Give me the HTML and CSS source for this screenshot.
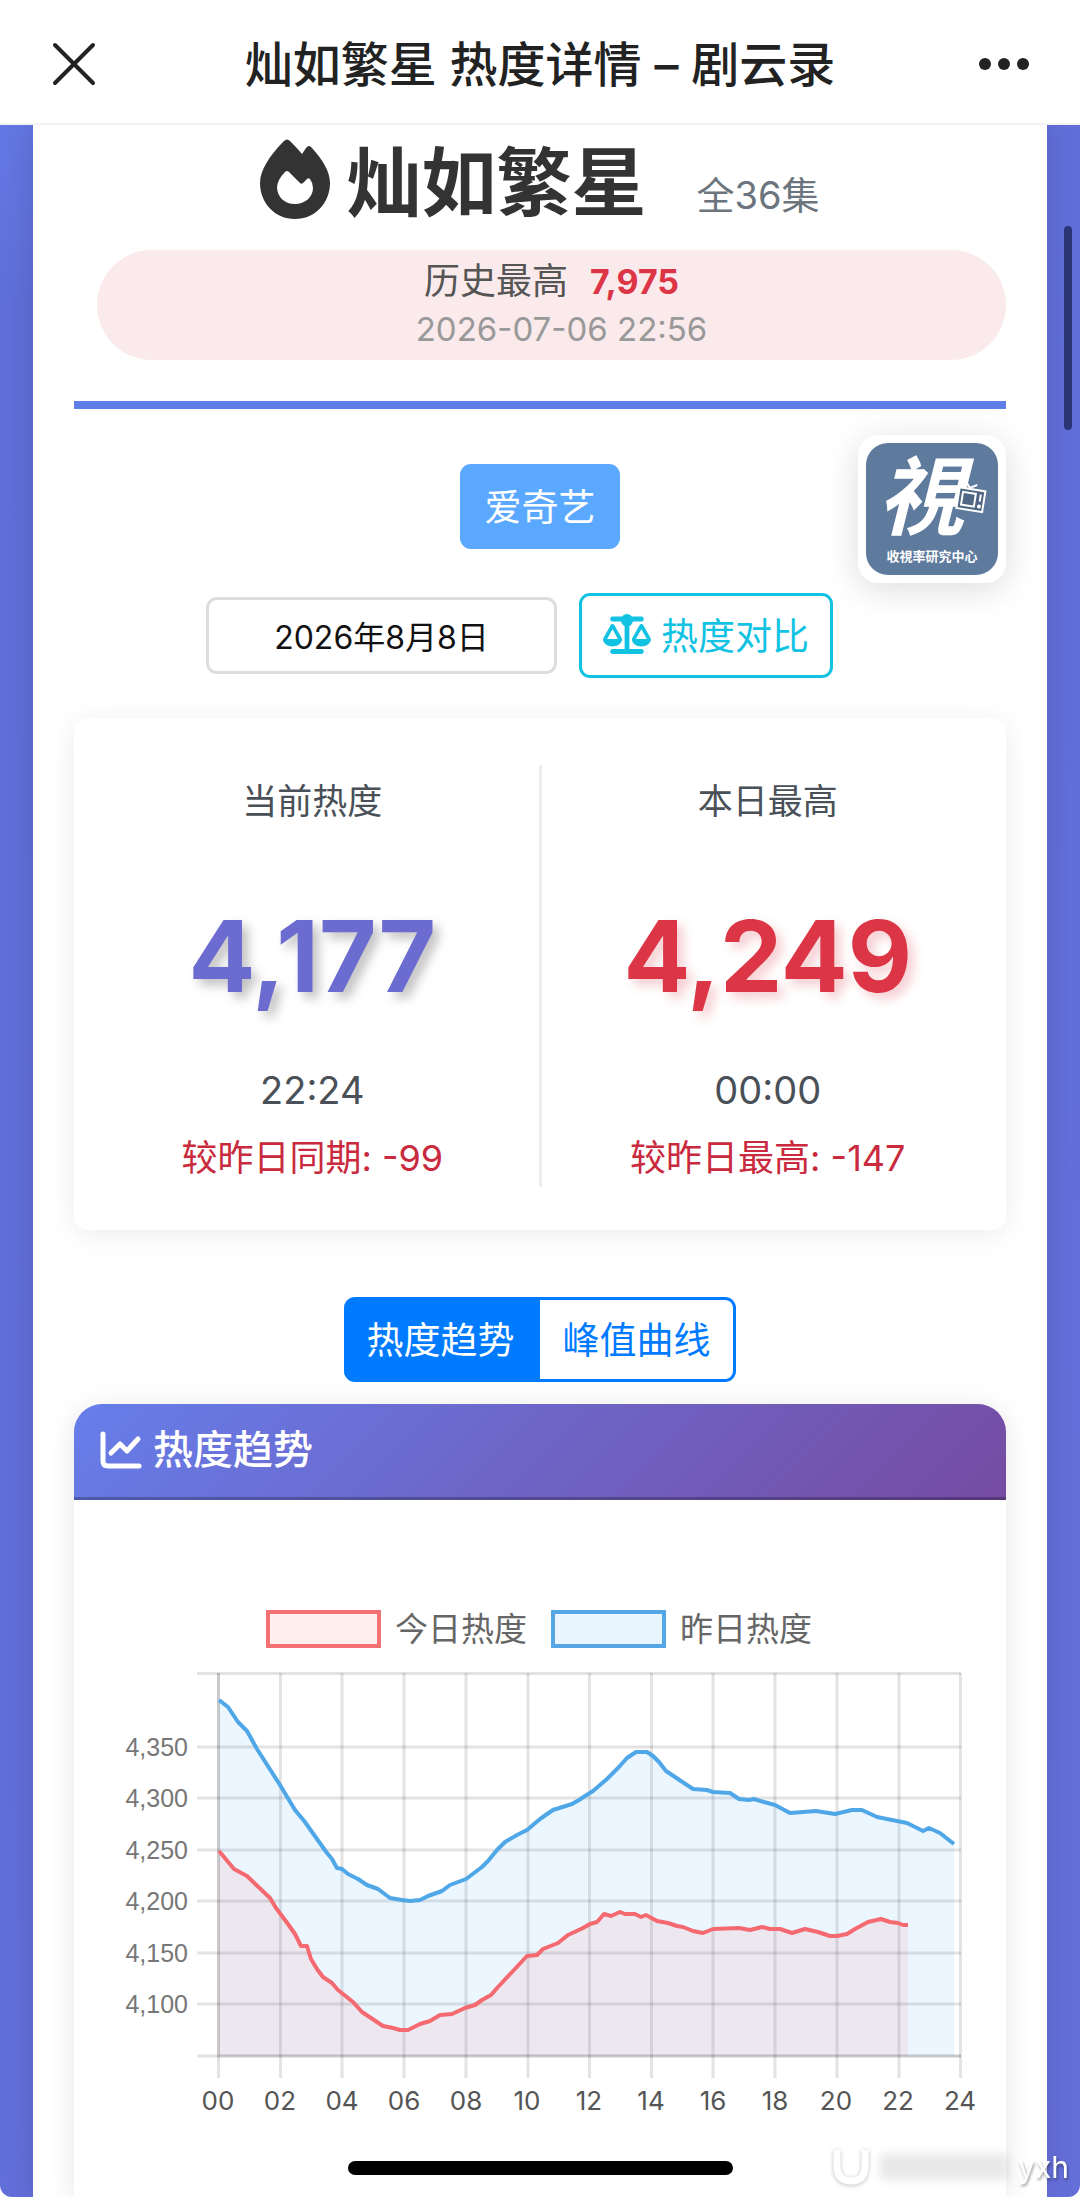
FILE: index.html
```html
<!DOCTYPE html>
<html lang="zh-CN">
<head>
<meta charset="UTF-8">
<meta name="viewport" content="width=device-width, initial-scale=1.0">
<title>灿如繁星 热度详情 – 剧云录</title>
<link rel="stylesheet" href="styles.css">
</head>
<body>
<header class="navbar">
    <button class="nav-button" aria-label="关闭">
        <svg width="52" height="44" viewBox="0 0 52 44"><path d="M5 3L43 41M43 3L5 41" stroke="#222" stroke-width="4" stroke-linecap="round"/></svg>
    </button>
    <div class="nav-title">灿如繁星 热度详情 – 剧云录</div>
    <button class="nav-button" aria-label="更多">
        <svg width="52" height="14" viewBox="0 0 52 14" fill="#222"><circle cx="7" cy="7" r="6"/><circle cx="26" cy="7" r="6"/><circle cx="45" cy="7" r="6"/></svg>
    </button>
</header>

<main class="container">
    <section class="title-area">
        <div class="title-row">
            <svg class="fire" width="70" height="80" viewBox="0 0 70 80"><path fill="#333" fill-rule="evenodd" d="M24 2Q27-1 30 2Q37 9 42 15L46 9Q49 5 52 9C62 20 70 32 70 44C70 64 55 80 35 80C15 80 0 64 0 44C0 31 10 16 24 2ZM25 33Q17 41 17 49C18 59 25 65 35 65C45 65 53 58 53 49Q53 44 50 40Q48 38 46 41L43 44Q41 46 39 43L29 33Q27 31 25 33Z"/></svg>
            <h1>灿如繁星</h1>
            <span class="episodes">全36集</span>
        </div>
        <div class="history">
            <div class="history-top">历史最高 <b>7,975</b></div>
            <div class="history-time">2026-07-06 22:56</div>
        </div>
    </section>

    <section class="controls">
        <button class="platform">爱奇艺</button>
        <div class="control-row">
            <input class="date-input" type="text" aria-label="日期" value="2026年8月8日">
            <button class="compare">
                <svg width="48" height="40" viewBox="0 0 640 512" preserveAspectRatio="none" fill="currentColor"><path d="M384 32h128c17.700 0 32 14.300 32 32s-14.300 32-32 32H398.400c-5.200 25.800-22.900 47.100-46.400 57.300V448h160c17.700 0 32 14.300 32 32s-14.300 32-32 32H128c-17.700 0-32-14.300-32-32s14.300-32 32-32h160V153.300c-23.500-10.300-41.200-31.600-46.400-57.300H128c-17.700 0-32-14.300-32-32s14.300-32 32-32h128c14.600-19.400 37.800-32 64-32s49.400 12.600 64 32zm55.600 288h144.900L512 195.800 439.600 320zM512 416c-62.900 0-115.200-34-126-78.900-2.600-11 1-22.300 6.700-32.100l95.200-163.200c5-8.600 14.200-13.800 24.100-13.800s19.100 5.300 24.100 13.800L631.300 305c5.700 9.800 9.300 21.100 6.700 32.100C627.200 382 574.900 416 512 416zM126.800 195.800L54.400 320h144.900L126.800 195.800zM.9 337.100c-2.600-11 1-22.300 6.700-32.100l95.200-163.200c5-8.600 14.200-13.800 24.100-13.800s19.100 5.300 24.100 13.800L246.200 305c5.700 9.800 9.300 21.100 6.700 32.100C242 382 189.700 416 126.800 416S11.700 382 .9 337.100z"/></svg>
                <span>热度对比</span>
            </button>
        </div>
        <div class="logo-card">
            <div class="logo">
                <svg width="132" height="132" viewBox="0 0 132 132">
                    <text class="logo-main" x="55" y="85" text-anchor="middle">視</text>
                    <g fill="none" stroke="#fff" stroke-width="2" transform="rotate(9 104 56)"><rect x="92" y="46" width="26" height="21" fill="#4f6685"/><rect x="96" y="50" width="13" height="13"/><path d="M114 50v7M102 45l-5-6M102 45l7-4"/><circle cx="114" cy="62" r="1"/></g>
                    <text class="logo-sub" x="66" y="118" text-anchor="middle">收視率研究中心</text>
                </svg>
            </div>
        </div>
    </section>

    <section class="stats">
        <div class="stat">
            <div class="stat-label">当前热度</div>
            <div class="stat-value">4,177</div>
            <div class="stat-time">22:24</div>
            <div class="stat-diff">较昨日同期: -99</div>
        </div>
        <div class="stat">
            <div class="stat-label">本日最高</div>
            <div class="stat-value max">4,249</div>
            <div class="stat-time">00:00</div>
            <div class="stat-diff">较昨日最高: -147</div>
        </div>
    </section>

    <div class="tabs">
        <button class="tab active">热度趋势</button>
        <button class="tab">峰值曲线</button>
    </div>

    <section class="chart-card">
        <div class="chart-header">
            <svg width="42" height="38" viewBox="0 0 42 38" fill="none" stroke="#fff" stroke-width="5" stroke-linecap="round" stroke-linejoin="round"><path d="M3 3V30Q3 35 8 35H39"/><path d="M11 22L20 13L27 20L38 8"/></svg>
            <h2>热度趋势</h2>
        </div>
        <div class="legend">
            <span class="swatch today"></span><span>今日热度</span>
            <span class="swatch yesterday"></span><span>昨日热度</span>
        </div>
        <svg class="chart" viewBox="0 0 932 460">
            <!-- grid -->
            <path class="grid" d="M123 13.500H887M123 87H887M123 138H887M123 190H887M123 241H887M123 293H887M123 344H887M123 396H887"/>
            <path class="grid" d="M144.500 13V418M206.500 13V418M268 13V418M330 13V418M392 13V418M454 13V418M515.500 13V418M577.500 13V418M639 13V418M701 13V418M763 13V418M825 13V418M886.500 13V418"/>
            <path class="grid" d="M144.500 13V396H887"/>
            <!-- yesterday -->
            <path class="area-yesterday" d="M145 396V40L154 47 164 62 173 71 183 89 206 125 221 150 231 162 238 172 253 193 258 199 263 208 268 209 274 214 284 219 293 225 304 229 316 238 328 240 336 241 346 240 354 236 368 231 376 225 384 222 392 219 408 207 414 201 423 190 431 182 443 175 453 170 466 159 479 150 498 144 505 140 511 136 519 131 533 119 544 108 553 98 562 92 573 92 579 96 585 102 592 111 604 119 619 129 633 130 639 132 656 133 665 139 675 140 680 139 690 142 701 145 716 153 742 151 761 154 778 150 788 150 803 157 833 163 849 171 855 168 866 173 880 184V396Z"/>
            <polyline class="line-yesterday" points="145,40 154,47 164,62 173,71 183,89 206,125 221,150 231,162 238,172 253,193 258,199 263,208 268,209 274,214 284,219 293,225 304,229 316,238 328,240 336,241 346,240 354,236 368,231 376,225 384,222 392,219 408,207 414,201 423,190 431,182 443,175 453,170 466,159 479,150 498,144 505,140 511,136 519,131 533,119 544,108 553,98 562,92 573,92 579,96 585,102 592,111 604,119 619,129 633,130 639,132 656,133 665,139 675,140 680,139 690,142 701,145 716,153 742,151 761,154 778,150 788,150 803,157 833,163 849,171 855,168 866,173 880,184"/>
            <!-- today -->
            <path class="area-today" d="M145 396V191L160 209 173 216 196 238 202 248 214 264 221 274 227 286 233 286 237 299 243 309 249 317 258 323 264 330 279 342 288 352 294 356 309 366 319 368 326 370 334 370 346 364 356 361 366 355 378 354 391 348 401 345 408 340 417 335 424 327 453 296 463 295 469 289 484 283 494 275 509 268 516 264 523 262 530 254 537 256 546 252 551 254 561 254 567 257 572 255 583 261 594 263 603 266 609 267 619 271 629 273 639 269 665 268 676 270 688 267 696 269 706 269 718 273 731 269 744 272 756 276 763 276 773 274 781 269 794 262 807 259 816 262 824 263 829 265 834 265V396Z"/>
            <polyline class="line-today" points="145,191 160,209 173,216 196,238 202,248 214,264 221,274 227,286 233,286 237,299 243,309 249,317 258,323 264,330 279,342 288,352 294,356 309,366 319,368 326,370 334,370 346,364 356,361 366,355 378,354 391,348 401,345 408,340 417,335 424,327 453,296 463,295 469,289 484,283 494,275 509,268 516,264 523,262 530,254 537,256 546,252 551,254 561,254 567,257 572,255 583,261 594,263 603,266 609,267 619,271 629,273 639,269 665,268 676,270 688,267 696,269 706,269 718,273 731,269 744,272 756,276 763,276 773,274 781,269 794,262 807,259 816,262 824,263 829,265 834,265"/>
            <g class="y-labels">
                <text x="114" y="96">4,350</text>
                <text x="114" y="147">4,300</text>
                <text x="114" y="199">4,250</text>
                <text x="114" y="250">4,200</text>
                <text x="114" y="302">4,150</text>
                <text x="114" y="353">4,100</text>
            </g>
            <g class="x-labels">
                <text x="144" y="450">00</text>
                <text x="206" y="450">02</text>
                <text x="268" y="450">04</text>
                <text x="330" y="450">06</text>
                <text x="392" y="450">08</text>
                <text x="453" y="450">10</text>
                <text x="515" y="450">12</text>
                <text x="577" y="450">14</text>
                <text x="639" y="450">16</text>
                <text x="701" y="450">18</text>
                <text x="762" y="450">20</text>
                <text x="824" y="450">22</text>
                <text x="886" y="450">24</text>
            </g>
        </svg>
    </section>
</main>

<div class="scrollbar"></div>
<div class="home-bar"></div>
<div class="watermark">
    <svg width="38" height="40" viewBox="0 0 38 40" fill="none" stroke="#fff" stroke-width="7"><path d="M5 3V19Q5 34 19 34Q33 34 33 19V3"/></svg>
    <span class="smudge"></span>
    <span>yxh</span>
</div>
</body>
</html>
```
FILE: styles.css
```css
* {
    box-sizing: border-box;
}
html {
    background-color: #fff;
}
body {
    font-family: Inter, "Noto Sans CJK SC", sans-serif;
    background: linear-gradient(135deg, #667eea 0%, #5f6ed8 10%, #656fda 100%);
    border-radius: 0 0 12px 12px;
    color: #333;
    margin: 0;
}
h1, h2 {
    margin: 0;
}
button, input {
    font-family: inherit;
}
.navbar {
    position: relative;
    background-color: #fff;
    border-bottom: 2px solid #f3f3f3;
    height: 125px;
    padding: 4px 50px 0;
    display: flex;
    justify-content: space-between;
    align-items: center;
}
.nav-button {
    background: none;
    border: 0;
    padding: 0;
    display: flex;
}
.nav-title {
    font-size: 48px;
    font-weight: 500;
    color: #222;
    padding-bottom: 5px;
}
.container {
    background-color: #fff;
    box-shadow: 0 0 28px rgba(0,0,0,0.12);
    margin: 0 33px;
    padding: 14px 41px 0;
}
.title-area {
    border-bottom: 8px solid #5f7de6;
    padding-bottom: 41px;
}
.title-row {
    display: flex;
    justify-content: center;
    height: 88px;
}
h1 {
    font-size: 75px;
    line-height: 88px;
    margin: 0 50px 0 16px;
}
.episodes {
    color: #6c757d;
    font-size: 38px;
    line-height: 112px;
}
.history {
    background-color: #faeaec;
    border-radius: 55px;
    margin: 23px 0 0 23px;
    height: 110px;
    padding: 7px 8px;
    text-align: center;
    color: #555;
    font-size: 36px;
    line-height: 48px;
}
.history b {
    color: #dc3545;
    font-size: 34px;
    margin-left: 12px;
}
.history-time {
    color: #999;
    font-size: 33px;
    line-height: 46px;
    padding-left: 20px;
}
.controls {
    position: relative;
    padding-top: 55px;
    display: flex;
    flex-direction: column;
    align-items: center;
}
.platform {
    background-color: #5aa8ff;
    border: 0;
    border-radius: 11px;
    color: #fff;
    font-size: 37px;
    width: 160px;
    height: 85px;
    padding: 0 0 4px;
}
.control-row {
    display: flex;
    align-items: center;
    gap: 22px;
    margin-top: 44px;
    padding-right: 41px;
    width: 668px;
    max-width: 100%;
}
.date-input {
    flex: 1;
    min-width: 0;
    height: 77px;
    border: 3px solid #ddd;
    border-radius: 11px;
    color: #111;
    font-size: 32px;
    text-align: center;
    padding: 0 0 2px;
}
.compare {
    display: flex;
    align-items: center;
    justify-content: center;
    gap: 10px;
    width: 254px;
    height: 85px;
    background-color: #fff;
    border: 3px solid #12c2e2;
    border-radius: 11px;
    color: #12c2e2;
    font-size: 37px;
    padding: 0 0 4px;
    white-space: nowrap;
}
.logo-card {
    position: absolute;
    top: 26px;
    right: 0;
    background-color: #fff;
    border-radius: 20px;
    padding: 8px;
    box-shadow: 0 6px 34px rgba(0,0,0,0.14);
}
.logo {
    background-color: #5e7a9d;
    border-radius: 22px;
    width: 132px;
    height: 132px;
}
.logo-main {
    fill: #fff;
    font-size: 86px;
    font-weight: 700;
    font-style: italic;
}
.logo-sub {
    fill: #fff;
    font-size: 13px;
    font-weight: 700;
}
.stats {
    display: flex;
    border-radius: 14px;
    box-shadow: 0 4px 28px rgba(0,0,0,0.08);
    margin-top: 40px;
    padding: 47px 12px 43px;
}
.stat {
    flex: 1;
    text-align: center;
    color: #495057;
}
.stat:first-child {
    border-right: 3px solid #eee;
}
.stat-label {
    font-size: 35px;
    line-height: 72px;
}
.stat-value {
    color: #6c6bd0;
    font-size: 99px;
    font-weight: 700;
    line-height: 238px;
    text-shadow: 6px 6px 11px rgba(0,0,0,0.25);
}
.stat-value.max {
    color: #dc3545;
    text-shadow: 6px 6px 11px rgba(220,53,69,0.25);
}
.stat-time {
    font-size: 38px;
    line-height: 30px;
}
.stat-diff {
    color: #c92a3d;
    font-size: 36px;
    line-height: 58px;
    margin-top: 24px;
}
.tabs {
    display: flex;
    justify-content: center;
    margin: 67px 0 22px;
}
.tab {
    width: 196px;
    height: 85px;
    background-color: #fff;
    border: 3px solid #007bff;
    border-left: 0;
    border-radius: 0 11px 11px 0;
    color: #007bff;
    font-size: 37px;
    padding: 0 0 4px;
}
.tab.active {
    background-color: #007bff;
    border-radius: 11px 0 0 11px;
    color: #fff;
}
.chart-card {
    border-radius: 28px 28px 0 0;
    box-shadow: 0 4px 28px rgba(0,0,0,0.1);
    padding-bottom: 77px;
}
.chart-header {
    display: flex;
    align-items: center;
    gap: 11px;
    height: 96px;
    padding: 0 26px 2px;
    border-radius: 28px 28px 0 0;
    border-bottom: 3px solid rgba(0,0,0,0.25);
    background: linear-gradient(135deg, #667eea, #764ba2) border-box;
    color: #fff;
}
h2 {
    font-size: 40px;
    font-weight: 500;
    line-height: 48px;
}
.legend {
    display: flex;
    justify-content: center;
    align-items: center;
    gap: 14px;
    color: #666;
    font-size: 33px;
    line-height: 40px;
    padding: 109px 2px 0 0;
}
.swatch {
    width: 115px;
    height: 38px;
    border: 4px solid #f47174;
    background-color: #ffefef;
}
.swatch.yesterday {
    border-color: #54a6e4;
    background-color: #e9f5fe;
    margin-left: 10px;
}
.chart {
    display: block;
    width: 100%;
    margin-top: 11px;
}
.grid {
    fill: none;
    stroke: rgba(0,0,0,0.11);
    stroke-width: 3;
}
.area-yesterday {
    fill: rgba(54,162,255,0.1);
}
.area-today {
    fill: rgba(255,99,107,0.1);
}
.line-yesterday, .line-today {
    fill: none;
    stroke: #4fa7e8;
    stroke-width: 4;
    stroke-linejoin: round;
}
.line-today {
    stroke: #f46a70;
}
.y-labels {
    font-family: "Liberation Sans", sans-serif;
    font-size: 25px;
    fill: #777;
    text-anchor: end;
}
.x-labels {
    font-size: 26px;
    fill: #555;
    text-anchor: middle;
}
/* things floating over the page */
.scrollbar {
    position: fixed;
    top: 226px;
    right: 8px;
    width: 8px;
    height: 204px;
    border-radius: 4px;
    background-color: #2a3576;
}
.home-bar {
    position: fixed;
    bottom: 22px;
    left: 50%;
    width: 385px;
    height: 14px;
    margin-left: -192px;
    border-radius: 7px;
    background-color: #000;
}
.watermark {
    position: fixed;
    right: 11px;
    bottom: 10px;
    display: flex;
    align-items: center;
    gap: 10px;
    color: #fff;
    font-size: 30px;
    text-shadow: 1px 2px 3px rgba(0,0,0,0.4);
}
.watermark svg {
    filter: drop-shadow(0 1px 2px rgba(0,0,0,0.25));
}
.smudge {
    width: 128px;
    height: 26px;
    background-color: rgba(0,0,0,0.09);
    filter: blur(5px);
}
```
